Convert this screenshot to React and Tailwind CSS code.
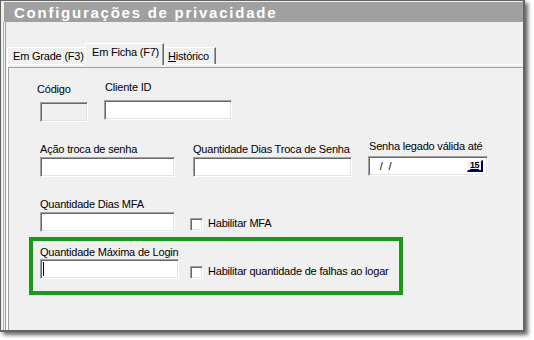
const sunken =
  'border border-t-[#a0a0a0] border-l-[#a0a0a0] border-r-white border-b-white shadow-[inset_1px_1px_0_#696969,inset_-1px_-1px_0_#e3e3e3]';

function Label({ children, className = '' }) {
  return <div className={`h-[13px] leading-[13px] whitespace-nowrap ${className}`}>{children}</div>;
}

function Box({ className = '', children }) {
  return <div className={`h-[20px] bg-white ${sunken} ${className}`}>{children}</div>;
}

function Check({ label, className = '' }) {
  return (
    <div className={`flex items-center ${className}`}>
      <div className={`w-[13px] h-[13px] bg-white ${sunken}`} />
      <span className="ml-[5px] -mt-[3px] leading-[13px] whitespace-nowrap">{label}</span>
    </div>
  );
}

export default function App() {
  return (
    <div className="w-[534px] h-[340px] bg-white font-['Liberation_Sans',Arial,sans-serif] text-[11px] tracking-[-0.2px] text-black">
      <div className="w-[525px] h-[332px] flex flex-col bg-[#f0f0f0] border-l border-t border-r-2 border-b-2 border-[#646464] shadow-[3px_3px_4px_rgba(0,0,0,0.6)] overflow-hidden">
        {/* title */}
        <div className="ml-[3px] mt-[1px] h-[20px] bg-[#a0a0a0] pl-[10px] pt-[1px] leading-[19px] text-white font-bold text-[15px] tracking-[1.75px]">
          Configurações de privacidade
        </div>

        <div className="flex-1 flex pl-[2px]">
          <div className="flex-1 flex border-l border-[#b4b4b4] pl-[1px]">
            <div className="flex-1 flex flex-col border-l border-[#a0a0a0] pl-[1px]">
              {/* tabs */}
              <div className="h-[42px] flex items-end">
                <div className="w-[78px] h-[17px] border-t border-l border-white pl-[5px] pt-[2px] leading-[13px]">
                  Em Grade (F3)
                </div>
                <div className="relative z-10 -mb-[1px] w-[79px] h-[22px] bg-[#f0f0f0] border-t border-l border-white border-r border-r-[#696969] shadow-[inset_-1px_0_0_#a0a0a0] pl-[6px] pt-[2px] leading-[13px]">
                  Em Ficha (F7)
                </div>
                <div className="w-[52px] h-[17px] border-t border-white border-r border-r-[#696969] shadow-[inset_-1px_0_0_#a0a0a0] pl-[4px] pt-[2px] leading-[13px]">
                  <span className="underline">H</span>istórico
                </div>
              </div>

              {/* panel */}
              <div className="flex-1 flex flex-col border-t border-l border-white">
                <div className="flex-1 mt-[2px] border-t border-l border-[#a0a0a0] flex flex-col">
                  {/* row 1 */}
                  <div className="flex items-start mt-[13px]">
                    <div className="ml-[28px] mt-[2px] flex flex-col">
                      <Label>Código</Label>
                      <div className={`ml-[3px] mt-[6px] w-[48px] h-[20px] bg-[#f0f0f0] ${sunken}`} />
                    </div>
                    <div className="ml-[16px] flex flex-col">
                      <Label className="pl-[1px]">Cliente ID</Label>
                      <Box className="mt-[6px] w-[128px]" />
                    </div>
                  </div>

                  {/* row 2 */}
                  <div className="flex items-start mt-[18px]">
                    <div className="ml-[31px] mt-[3px] flex flex-col">
                      <Label>Ação troca de senha</Label>
                      <Box className="mt-[1px] w-[135px]" />
                    </div>
                    <div className="ml-[18px] mt-[3px] flex flex-col">
                      <Label>Quantidade Dias Troca de Senha</Label>
                      <Box className="mt-[1px] w-[159px]" />
                    </div>
                    <div className="ml-[16px] flex flex-col">
                      <Label className="pl-[1px]">Senha legado válida até</Label>
                      <Box className="mt-[3px] w-[120px] flex items-center justify-between pl-[8px] pr-[4px]">
                        <span className="whitespace-pre leading-[13px]">{' /  /'}</span>
                        <div className="w-[16px] h-[12px] flex items-center justify-center border-r-2 border-b-2 border-[#000060] border-t border-l border-t-white border-l-white bg-[#f0f0f0]">
                          <span className="text-[9px] font-bold leading-[9px] tracking-[-0.5px] underline">15</span>
                        </div>
                      </Box>
                    </div>
                  </div>

                  {/* row 3 */}
                  <div className="flex items-start mt-[21px]">
                    <div className="ml-[31px] flex flex-col">
                      <Label>Quantidade Dias MFA</Label>
                      <Box className="mt-[1px] w-[135px]" />
                    </div>
                    <Check label="Habilitar MFA" className="ml-[15px] mt-[20px]" />
                  </div>

                  {/* highlighted */}
                  <div className="ml-[20px] mt-[5px] w-[374px] h-[58px] border-4 border-[#1a9a1a] flex items-start">
                    <div className="ml-[7px] mt-[5px] flex flex-col">
                      <Label>Quantidade Máxima de Login</Label>
                      <Box className="w-[139px] flex items-start">
                        <div className="ml-[2px] mt-[2px] w-[1px] h-[14px] bg-black" />
                      </Box>
                    </div>
                    <Check label="Habilitar quantidade de falhas ao logar" className="ml-[11px] mt-[25px]" />
                  </div>
                </div>
              </div>
            </div>
          </div>
        </div>
      </div>
    </div>
  );
}
